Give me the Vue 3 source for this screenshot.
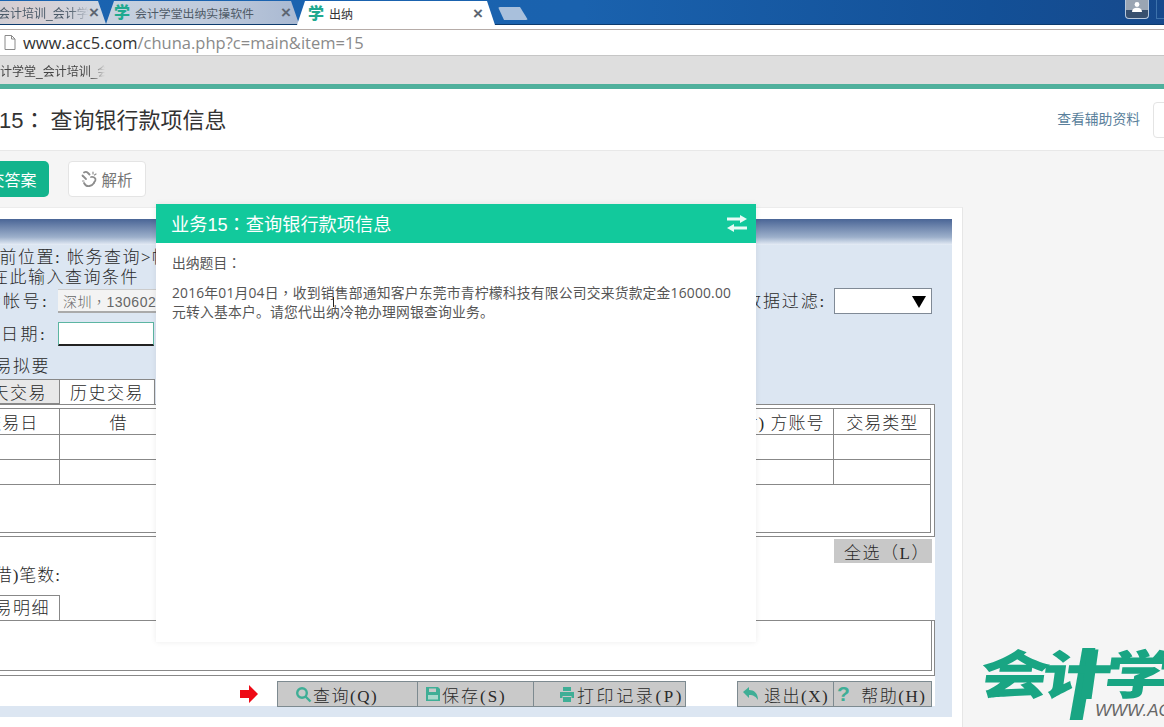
<template>
  <div class="page">
    <div class="tabstrip">
      <div class="tab tab-first">
        <span class="tab-title">会计培训_会计学堂</span>
        <span class="tab-close">×</span>
      </div>
      <div class="tab tab-second">
        <span class="favicon">学</span>
        <span class="tab-title">会计学堂出纳实操软件</span>
        <span class="tab-close">×</span>
      </div>
      <div class="tab tab-active">
        <span class="favicon">学</span>
        <span class="tab-title">出纳</span>
        <span class="tab-close">×</span>
      </div>
      <div class="tab-new"></div>
      <div class="win-controls">
        <div class="win-user">
          <svg width="14" height="14" viewBox="0 0 14 14">
            <circle cx="7" cy="4.500" r="2.400" fill="#fff" />
            <path d="M2 12c0-3 2-4.200 5-4.200s5 1.200 5 4.200z" fill="#fff" />
          </svg>
        </div>
        <div class="win-next"></div>
      </div>
    </div>

    <div class="addressbar">
      <svg class="doc-icon" width="12" height="15" viewBox="0 0 12 15">
        <path d="M1 .5h6.500L11 4v10.500H1z M7.500 .5V4H11" fill="#fff" stroke="#8a8a8a" />
      </svg>
      <span class="url"><b>www.acc5.com</b>/chuna.php?c=main&amp;item=15</span>
    </div>
    <div class="bookmarks"><span class="bookmark">会计学堂_会计培训_会</span></div>
    <div class="accent-line"></div>

    <header class="titlebar">
      <h1>业务15<span class="mid">：</span>查询银行款项信息</h1>
      <div class="title-right">
        <a class="aux-link">查看辅助资料</a>
        <div class="aux-box"></div>
      </div>
    </header>

    <div class="actions">
      <button class="btn-answer">提交答案</button>
      <button class="btn-analysis">
        <svg width="17" height="18" viewBox="0 0 17 18" fill="none" stroke="#8d8d8d" stroke-width="1.800" stroke-linecap="round">
          <path d="M3 2.500c1.500-1 3-.5 4 .5l1.500 1.500" />
          <path d="M1.500 5.500l3.500 3.500" />
          <path d="M10 7c2-.5 4 .5 4.500 2 .3 1.500-.5 2.500-1.500 3.500" />
          <path d="M3 13c1 2 3 3.500 5.500 3 2-.3 3.500-1.500 4.500-3" />
          <path d="M12 2v2M15 4l-1.500 1M1.500 11h1.500" stroke-width="1.200" />
        </svg>
        解析
      </button>
    </div>

    <div class="card">
      <div class="panel">
        <div class="band"></div>
        <div class="crumb">当前位置:&nbsp;帐务查询&gt;帐户明细查询</div>
        <div class="cond">在此输入查询条件</div>

        <div class="account-row">
          <span class="field-label field-account">银行帐号:</span>
          <div class="account-select">深圳<span class="mid">，</span>130602</div>
          <div class="filter">
            <span>数据过滤:</span>
            <div class="filter-select"><i class="triangle"></i></div>
          </div>
        </div>

        <div class="date-row">
          <span class="field-label field-date">交易日期:</span>
          <div class="date-input"></div>
        </div>

        <div class="summary-label">交易拟要</div>

        <div class="tab-row">
          <div class="sheet-tab sheet-muted">当天交易</div>
          <div class="sheet-tab sheet-on">历史交易</div>
        </div>

        <div class="sheet">
          <div class="grid-box">
            <div class="grid-inner">
              <table class="grid">
                <colgroup>
                  <col v-for="w in colWidths" :key="w.name" :style="{ width: w.size + 'px' }" />
                </colgroup>
                <thead>
                  <tr><th v-for="w in colWidths" :key="w.name" :class="w.cls">{{ w.name }}</th></tr>
                </thead>
                <tbody>
                  <tr v-for="r in 2" :key="r"><td v-for="w in colWidths" :key="w.name"></td></tr>
                </tbody>
              </table>
            </div>
          </div>

          <div class="select-row">
            <button class="grey-btn">全选（L）</button>
          </div>
          <div class="count-row">(借)笔数:</div>

          <div class="detail-tab">交易明细</div>
          <div class="detail-box"><div class="detail-inner"></div></div>

          <div class="toolbar">
            <svg class="go-arrow" width="20" height="20" viewBox="0 0 20 20">
              <path d="M1 6h9V1l9 9-9 9v-5H1z" fill="#ee0a16" />
            </svg>
            <div class="tool-group">
              <div class="tool tool-query">
                <svg width="17" height="17" viewBox="0 0 17 17" fill="none" stroke="#3fae96" stroke-width="2.400">
                  <circle cx="7" cy="7" r="4.800" />
                  <path d="M10.500 10.500L15.500 15.500" />
                </svg>
                查询(Q)
              </div>
              <div class="tool tool-save">
                <svg width="16" height="16" viewBox="0 0 16 16">
                  <path d="M1 1h12l2 2v12H1z" fill="#3fae96" />
                  <path d="M4 2.500h7v3.500H4z" fill="#c9c9c9" />
                  <path d="M3 9h10v4.500H3z" fill="#a8d8cc" />
                </svg>
                保存(S)
              </div>
              <div class="tool tool-print">
                <svg width="16" height="17" viewBox="0 0 16 17" fill="#3fae96">
                  <path d="M4 1h8v4H4z" />
                  <path d="M1 6h14v6h-2.500v-2h-9v2H1z" />
                  <path d="M4 11h8v5H4z" />
                </svg>
                打印记录(P)
              </div>
            </div>
            <div class="tool-group tool-group-right">
              <div class="tool tool-exit">
                <svg width="17" height="15" viewBox="0 0 17 15">
                  <path d="M1 5l6-5v3c5 0 9 3 9 10-2-3-4-5-9-5v3z" fill="#3fae96" />
                </svg>
                退出(X)
              </div>
              <div class="tool tool-help">
                <span class="help-mark">?</span>
                帮助(H)
              </div>
            </div>
          </div>
        </div>
        <div class="panel-foot"></div>
      </div>
    </div>

    <div class="logo">
      <span class="logo-mark">会计学</span>
      <span class="logo-url">WWW.ACC5.COM</span>
    </div>

    <section class="modal">
      <div class="modal-head">
        <span>业务15<span class="mid">：</span>查询银行款项信息</span>
        <svg width="20" height="17" viewBox="0 0 20 17" fill="#e8fbf6">
          <path d="M0 2.500h13V0l7 4-7 4V5.500H0z" />
          <path d="M20 11.500H7V9l-7 4 7 4v-2.500h13z" />
        </svg>
      </div>
      <div class="modal-body">
        <p class="question-label">出纳题目<span class="mid">：</span></p>
        <p class="question">
          2016年01月04日<span class="mid">，</span>收到销售部通知客户东莞市青柠檬科技有限公司交来货款定金16000.00<br />元转入基本户。请您代出纳冷艳办理网银查询业务。
        </p>
        <i class="ibeam"></i>
      </div>
    </section>
  </div>
</template>

<script setup>
const colWidths = [
  { name: '交易日', size: 95, cls: 'col-date' },
  { name: '借', size: 119, cls: '' },
  { name: '贷', size: 200, cls: '' },
  { name: '摘要', size: 200, cls: '' },
  { name: '(对) 方账号', size: 255, cls: 'col-account' },
  { name: '交易类型', size: 98, cls: '' }
]
</script>

<style>
html,
body {
  margin: 0;
  background: #f5f5f5;
}
</style>

<style scoped>
.page {
  position: relative;
  width: 1164px;
  height: 727px;
  overflow: hidden;
  background: #f5f5f5;
  font-family: "Liberation Sans", "Noto Sans CJK SC", sans-serif;
}
.mid {
  font-family: "Noto Sans CJK TC", sans-serif;
}

/* browser chrome */
.tabstrip {
  display: flex;
  height: 29px;
  background: linear-gradient(90deg, #1a63b0 0%, #1a62ae 50%, #135097 85%, #16498c 100%) top / 100% 24px no-repeat, linear-gradient(#0d3b6e, #0d3b6e) 0 24px / 100% 1px no-repeat, #fff;
}
.tab {
  display: flex;
  align-items: center;
  flex: none;
  height: 23px;
  margin-top: 1px;
  font-size: 12px;
  white-space: nowrap;
  overflow: hidden;
}
.tab-first {
  width: 168px;
  margin-left: -62px;
  background: linear-gradient(90deg, #b9c8d8, #d8cfd2 50%, #cdd6e2);
  clip-path: polygon(0 0, 160px 0, 168px 100%, 0 100%);
  color: #4b5a68;
}
.tab-first .tab-title {
  margin-left: 60px;
  width: 91px;
  overflow: hidden;
  mask-image: linear-gradient(90deg, #000 78%, transparent);
}
.tab-second {
  width: 193px;
  background: linear-gradient(90deg, #c6d1df, #c0cbdc 50%, #a9b9d2);
  clip-path: polygon(0 100%, 8px 0, 185px 0, 193px 100%);
  color: #4e5a66;
}
.tab-second .favicon {
  margin-left: 8px;
}
.tab-second .tab-title {
  margin-left: 5px;
  width: 146px;
  font-size: 11.900px;
}
.tab-active {
  width: 202px;
  height: 28px;
  margin-left: -2px;
  background: #fff;
  clip-path: polygon(0 24px, 8px 0, 190px 0, 198px 24px, 202px 100%, 0 100%);
  color: #333;
  align-items: flex-start;
  padding-top: 4px;
  box-sizing: border-box;
}
.tab-active .favicon {
  margin-left: 11px;
}
.tab-active .tab-title {
  margin-left: 5px;
  width: 144px;
}
.favicon {
  flex: none;
  font-size: 16px;
  line-height: 18px;
  font-weight: 900;
  color: #1fa98f;
}
.tab-close {
  font-size: 17px;
  line-height: 18px;
  font-weight: 700;
  color: #5d6672;
}
.tab-new {
  flex: none;
  width: 30px;
  height: 13px;
  margin: 7px 0 0 -1px;
  background: #a9c0dc;
  border-radius: 2px;
  clip-path: polygon(0 0, 22px 0, 30px 100%, 6px 100%);
}
.win-controls {
  display: flex;
  gap: 7px;
  margin-left: auto;
  height: 19px;
}
.win-user {
  display: flex;
  justify-content: center;
  width: 22px;
  height: 18px;
  border: 1px solid #b8c8dc;
  border-top: 0;
  border-radius: 0 0 4px 4px;
  background: linear-gradient(#9aa5b3 0, #9aa5b3 55%, #38506f 55%);
}
.win-next {
  width: 7px;
  height: 18px;
  border: 1px solid #3d72ab;
  border-top: 0;
  border-right: 0;
}
.addressbar {
  display: flex;
  align-items: center;
  box-sizing: border-box;
  height: 27px;
  border-top: 1px solid #b6aca8;
  border-bottom: 1px solid #c6c6c6;
  background: #fff;
}
.doc-icon {
  margin: 0 7px 0 4px;
}
.url {
  font-family: "Open Sans", "Liberation Sans", sans-serif;
  font-size: 16.500px;
  color: #8a8a8a;
}
.url b {
  font-weight: 400;
  color: #333;
}
.bookmarks {
  display: flex;
  align-items: center;
  height: 28px;
  background: #dedede;
}
.bookmark {
  width: 117px;
  margin-left: -12px;
  font-size: 12px;
  color: #444;
  white-space: nowrap;
  overflow: hidden;
  mask-image: linear-gradient(90deg, #000 88%, transparent);
}
.accent-line {
  height: 5px;
  background: #4fb09c;
}

/* page header */
.titlebar {
  display: flex;
  align-items: center;
  justify-content: space-between;
  box-sizing: border-box;
  height: 62px;
  padding-bottom: 3px;
  background: #fff;
  border-bottom: 1px solid #e8e8e8;
  margin-bottom: -1px;
}
.titlebar h1 {
  margin: 0 0 0 -45px;
  font-size: 22px;
  font-weight: 400;
  color: #333;
  white-space: nowrap;
}
.titlebar h1 .mid {
  margin-right: 5px;
}
.title-right {
  display: flex;
  align-items: center;
  margin-right: -21px;
}
.aux-link {
  font-size: 13.800px;
  color: #5a7f9c;
}
.aux-box {
  width: 30px;
  height: 34px;
  margin: 3px 0 0 13px;
  border: 1px solid #e4e4e4;
  border-radius: 4px;
}
.actions {
  display: flex;
  align-items: flex-start;
  height: 57px;
  padding-top: 11px;
  box-sizing: border-box;
}
.btn-answer {
  width: 89px;
  height: 36px;
  margin-left: -40px;
  padding: 0;
  border: 0;
  border-radius: 5px;
  background: #13b48d;
  color: #fff;
  font: 16px "Liberation Sans", "Noto Sans CJK SC", sans-serif;
}
.btn-analysis {
  display: flex;
  align-items: center;
  justify-content: center;
  gap: 3px;
  width: 78px;
  height: 36px;
  margin-left: 19px;
  padding: 0;
  border: 1px solid #e4e4e4;
  border-radius: 4px;
  background: #fff;
  color: #777;
  font: 15.500px "Liberation Sans", "Noto Sans CJK SC", sans-serif;
}

/* old accounting form */
.card {
  box-sizing: border-box;
  width: 1003px;
  height: 520px;
  margin-left: -40px;
  padding: 11px 10px 0 0;
  background: #fff;
  border-top: 1px solid #ececec;
  border-right: 1px solid #e6e6e6;
}
.panel {
  background: #dce6f2;
  color: #2a2a2a;
  font-family: "Liberation Serif", "Noto Sans CJK SC", serif;
  font-size: 17px;
  font-weight: 300;
}
.band {
  height: 26px;
  background: linear-gradient(#4a6596, #9db0cb 70%, #e6edf6);
}
.crumb,
.cond,
.summary-label {
  letter-spacing: 1.500px;
  white-space: nowrap;
}
.crumb {
  height: 22px;
  padding-left: 21px;
  line-height: 25px;
}
.cond {
  height: 21px;
  padding-left: 31px;
  line-height: 22px;
}
.account-row,
.date-row {
  display: flex;
  align-items: center;
}
.account-row {
  height: 33px;
  padding-bottom: 8px;
  box-sizing: border-box;
}
.date-row {
  height: 36px;
  padding-bottom: 11px;
  box-sizing: border-box;
}
.field-label {
  box-sizing: border-box;
  flex: none;
  width: 98px;
  margin-top: -2px;
  letter-spacing: 2.500px;
  white-space: nowrap;
}
.field-account {
  padding-left: 4px;
}
.field-date {
  padding-left: 2px;
}
.account-select {
  box-sizing: border-box;
  width: 140px;
  height: 24px;
  padding-left: 5px;
  border-bottom: 2px solid #aaa;
  border-top: 1px solid #ccc;
  background: #f3f3f3;
  color: #666;
  font-family: "Liberation Sans", "Noto Sans CJK SC", sans-serif;
  font-size: 14px;
  line-height: 23px;
  letter-spacing: .5px;
}
.filter {
  display: flex;
  align-items: center;
  gap: 8px;
  margin-left: auto;
  margin-right: 20px;
  letter-spacing: 1.800px;
}
.filter-select {
  position: relative;
  box-sizing: border-box;
  width: 98px;
  height: 26px;
  border: 1px solid #808a96;
  background: #fff;
}
.filter span {
  margin-top: -2px;
}
.triangle {
  position: absolute;
  right: 5px;
  top: 7px;
  border-left: 7px solid transparent;
  border-right: 7px solid transparent;
  border-top: 12px solid #000;
}
.date-input {
  box-sizing: border-box;
  width: 96px;
  height: 24px;
  border: 1px solid #5cb5a2;
  border-bottom: 2px solid #222;
  background: #fff;
}
.summary-label {
  height: 22px;
  padding-left: 16px;
  line-height: 20px;
}
.tab-row {
  display: flex;
  height: 25px;
}
.sheet-tab {
  box-sizing: border-box;
  height: 25px;
  line-height: 27px;
  text-align: center;
  letter-spacing: 1.500px;
  white-space: nowrap;
  border: 1px solid #888;
  border-bottom: 0;
}
.sheet-muted {
  width: 100px;
  background: #e8e8e8;
  border-bottom: 1px solid #888;
}
.sheet-on {
  width: 95px;
  background: #fff;
  border-left: 0;
}
.sheet {
  box-sizing: border-box;
  width: 975px;
  height: 302px;
  background: #fff;
}
.grid-box {
  box-sizing: border-box;
  height: 133px;
  padding: 3px 3px 3px 3px;
  border: 1px solid #888;
}
.grid-inner {
  box-sizing: border-box;
  height: 125px;
  border: 1px solid #888;
  border-left: 0;
}
.grid {
  width: 967px;
  table-layout: fixed;
  border-collapse: collapse;
}
.grid th,
.grid td {
  box-sizing: border-box;
  height: 25px;
  padding: 0;
  border-right: 1px solid #888;
  border-bottom: 1px solid #888;
  font-weight: 300;
  letter-spacing: 1px;
  text-align: center;
  white-space: nowrap;
}
.grid th:last-child,
.grid td:last-child {
  border-right: 0;
}
.grid .col-account {
  padding-right: 8px;
  text-align: right;
}
.select-row {
  display: flex;
  justify-content: flex-end;
  padding: 2px 3px 0 0;
}
.grey-btn {
  width: 98px;
  height: 24px;
  padding: 0 0 0 8px;
  border: 0;
  background: #c8c8c8;
  color: #2a2a2a;
  font: inherit;
  letter-spacing: 1.500px;
}
.count-row {
  height: 26px;
  padding-left: 28px;
  line-height: 26px;
  letter-spacing: 1px;
  white-space: nowrap;
}
.detail-tab {
  box-sizing: border-box;
  width: 100px;
  height: 26px;
  margin-top: 6px;
  padding-left: 16px;
  border-top: 1px solid #888;
  border-right: 1px solid #888;
  letter-spacing: 1.500px;
  line-height: 26px;
  white-space: nowrap;
}
.detail-box {
  box-sizing: border-box;
  height: 56px;
  margin-top: -1px;
  border-top: 1px solid #888;
  border-bottom: 1px solid #888;
  border-right: 1px solid #888;
}
.detail-inner {
  box-sizing: border-box;
  height: 50px;
  margin-right: 2px;
  border-right: 1px solid #888;
  border-bottom: 1px solid #888;
}
.toolbar {
  display: flex;
  align-items: center;
  height: 26px;
  margin-top: 5px;
  padding-left: 279px;
}
.go-arrow {
  flex: none;
  margin-right: 18px;
}
.tool-group {
  display: flex;
  box-sizing: border-box;
  height: 26px;
  border: 1px solid #7d8a90;
  background: #c9c9c9;
}
.tool-group-right {
  margin-left: 51px;
}
.tool {
  display: flex;
  align-items: center;
  box-sizing: border-box;
  height: 24px;
  letter-spacing: 1.500px;
  white-space: nowrap;
  border-right: 1px solid #7d8a90;
}
.tool:last-child {
  border-right: 0;
}
.tool-query {
  width: 140px;
  padding-left: 17px;
  gap: 1px;
}
.tool-save {
  width: 116px;
  padding-left: 7px;
  gap: 1px;
  letter-spacing: 2px;
}
.tool-print {
  width: 151px;
  padding-left: 25px;
  gap: 2px;
  letter-spacing: 2.600px;
}
.tool-exit {
  width: 96px;
  padding-left: 4px;
  gap: 5px;
}
.tool-help {
  width: 97px;
  padding-left: 3px;
  gap: 10px;
}
.help-mark {
  font-family: "Liberation Sans", sans-serif;
  font-size: 21px;
  font-weight: 700;
  color: #3fae96;
}
.panel-foot {
  height: 11px;
}

/* logo stays over the page corner */
.logo {
  position: absolute;
  left: 985px;
  top: 648px;
  width: 260px;
  color: #19a583;
}
.logo::before {
  content: "";
  position: absolute;
  left: 91px;
  top: 0;
  width: 13px;
  height: 72px;
  background: #19a583;
  transform: skewX(-10deg);
}
.logo-mark {
  display: block;
  margin-top: -8px;
  font-size: 58px;
  line-height: 80px;
  font-weight: 900;
  letter-spacing: -6px;
  white-space: nowrap;
  transform-origin: left top;
  transform: scale(1.200, .900) skewX(-6deg);
}
.logo-url {
  position: absolute;
  left: 110px;
  top: 53px;
  font-size: 17px;
  font-style: italic;
  color: #666;
  white-space: nowrap;
}

/* task dialog */
.modal {
  position: absolute;
  left: 156px;
  top: 204px;
  width: 600px;
  height: 438px;
  background: #fff;
  box-shadow: 0 0 6px rgba(0, 0, 0, .08);
}
.modal-head {
  display: flex;
  align-items: center;
  justify-content: space-between;
  height: 39px;
  padding: 0 9px 1px 15px;
  box-sizing: border-box;
  background: #12c99c;
  color: #fff;
  font-size: 18.200px;
}
.modal-body {
  position: relative;
  padding: 9px 16px;
  color: #555;
  font-size: 13.800px;
}
.question-label {
  margin: 0;
  line-height: 20px;
}
.question {
  margin: 9px 0 0;
  font-family: "Open Sans", "Liberation Sans", "Noto Sans CJK SC", sans-serif;
  letter-spacing: .2px;
  line-height: 19px;
  white-space: nowrap;
}
.ibeam {
  position: absolute;
  left: 177px;
  top: 54px;
  width: 1px;
  height: 10px;
  background: #222;
}
</style>
